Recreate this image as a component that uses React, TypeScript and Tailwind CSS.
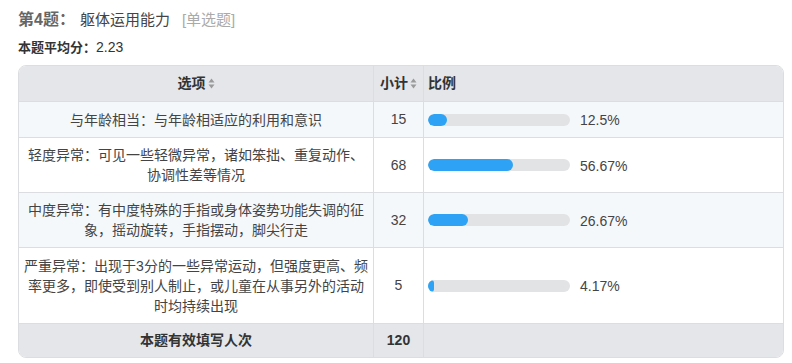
import React from 'react';

const rows = [
  { label: '与年龄相当：与年龄相适应的利用和意识', count: 15, pct: 12.5, text: '12.5%', h: 'h-[36px]' },
  { label: '轻度异常：可见一些轻微异常，诸如笨拙、重复动作、协调性差等情况', count: 68, pct: 56.67, text: '56.67%', h: 'h-[55px]' },
  { label: '中度异常：有中度特殊的手指或身体姿势功能失调的征象，摇动旋转，手指摆动，脚尖行走', count: 32, pct: 26.67, text: '26.67%', h: 'h-[55px]' },
  { label: '严重异常：出现于3分的一些异常运动，但强度更高、频率更多，即使受到别人制止，或儿童在从事另外的活动时均持续出现', count: 5, pct: 4.17, text: '4.17%', h: 'h-[76px]' },
];

const SortIcon = () => (
  <svg width="7" height="11" viewBox="0 0 7 11" className="ml-[2px] inline-block">
    <path d="M3.5 0.5 L6.5 4.5 L0.5 4.5 Z" fill="#9a9a9a" />
    <path d="M3.5 10.5 L6.5 6.5 L0.5 6.5 Z" fill="#9a9a9a" />
  </svg>
);

const App = () => {
  return (
    <div className="w-[792px] h-[363px] bg-white pl-[18px] pr-[8px] pt-[9px] text-[#444]" style={{ fontFamily: '"Liberation Sans", "Noto Sans CJK SC", sans-serif' }}>
      <div className="flex items-baseline leading-[22px]">
        <span className="text-[16px] font-bold text-[#666]">第4题：</span>
        <span className="ml-[5px] text-[15px] text-[#444]">躯体运用能力</span>
        <span className="ml-[12px] text-[15px] text-[#aaa]">[单选题]</span>
      </div>
      <div className="mt-[7px] flex items-baseline leading-[18px] text-[#333]">
        <span className="text-[13px] font-bold">本题平均分：</span>
        <span className="text-[14px]">2.23</span>
      </div>

      <div className="mt-[8px] w-[766px] rounded-[8px] border border-[#dcdde0] overflow-hidden text-[14px]">
        <div className="grid grid-cols-[354px_50px_1fr] h-[35px] bg-[#e4e6ea] font-bold text-[#333]">
          <div className="flex items-center justify-center">选项<SortIcon /></div>
          <div className="flex items-center justify-center border-l border-[#dcdde0]">小计<SortIcon /></div>
          <div className="flex items-center pl-[4px] border-l border-[#dcdde0]">比例</div>
        </div>

        {rows.map((r, i) => (
          <div
            key={i}
            className={`grid grid-cols-[354px_50px_1fr] border-t border-[#dcdde0] ${r.h} ${i % 2 === 0 ? 'bg-[#f5f8fb]' : 'bg-white'}`}
          >
            <div className="flex items-center justify-center px-[3px] text-center leading-[20px]">{r.label}</div>
            <div className="flex items-center justify-center border-l border-[#dcdde0]">{r.count}</div>
            <div className="flex items-center pl-[4px] border-l border-[#dcdde0]">
              <div className="w-[142px] h-[12px] rounded-full bg-[#e2e3e5] overflow-hidden">
                <div className="h-full rounded-full bg-[#2ea3f5]" style={{ width: `${Math.max(r.pct * 1.5, 6)}px` }} />
              </div>
              <span className="ml-[10px] mt-[2px]">{r.text}</span>
            </div>
          </div>
        ))}

        <div className="grid grid-cols-[354px_50px_1fr] h-[34px] border-t border-[#dcdde0] bg-[#e4e6ea] font-bold text-[#333]">
          <div className="flex items-center justify-center">本题有效填写人次</div>
          <div className="flex items-center justify-center border-l border-[#dcdde0]">120</div>
          <div className="border-l border-[#dcdde0]" />
        </div>
      </div>
    </div>
  );
};

export default App;
